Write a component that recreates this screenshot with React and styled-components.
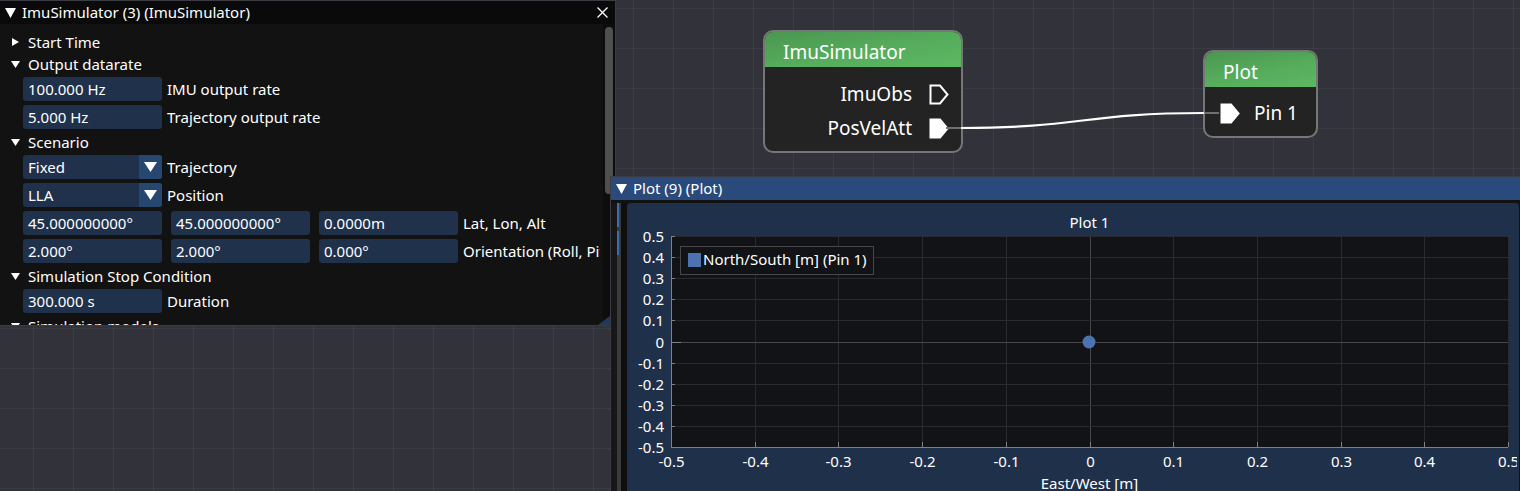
import React from 'react';
import styled, { createGlobalStyle } from 'styled-components';

const GlobalStyle = createGlobalStyle`
  html, body {
    margin: 0;
    padding: 0;
    background: #32323a;
    overflow: hidden;
  }
`;

const Canvas = styled.div`
  position: relative;
  width: 1520px;
  height: 491px;
  overflow: hidden;
  background-color: #32323a;
  background-image:
    linear-gradient(to right, #3c3c45 1px, transparent 1px),
    linear-gradient(to bottom, #3c3c45 1px, transparent 1px);
  background-size: 40px 40px;
  background-position: 33px 8px;
  font-family: "Noto Sans", "Liberation Sans", sans-serif;
  font-size: 15px;
  color: #ffffff;
`;

// ---------- floating ImGui windows ----------

const Window = styled.div`
  position: absolute;
  left: ${p => p.$x}px;
  top: ${p => p.$y}px;
  width: ${p => p.$w}px;
  height: ${p => p.$h}px;
  box-sizing: border-box;
  border: 1px solid #3b3b44;
  background: #121212;
  display: flex;
  flex-direction: column;
  overflow: hidden;
  z-index: ${p => p.$z || 1};
`;

const TitleBar = styled.div`
  flex: 0 0 23px;
  display: flex;
  align-items: center;
  gap: 6px;
  padding: 0 7px 0 5px;
  background: ${p => (p.$active ? '#294a7a' : '#0a0a0a')};
  white-space: nowrap;
`;

const TitleText = styled.span`
  flex: 1;
  line-height: 23px;
`;

const WindowInner = styled.div`
  flex: 1;
  display: flex;
  min-height: 0;
`;

const Body = styled.div`
  flex: 1;
  margin-right: 3px;
  padding-top: 9px;
  display: flex;
  flex-direction: column;
  gap: 4px;
  overflow: hidden;
  line-height: 18px;
`;

const TreeRow = styled.div`
  flex: 0 0 18px;
  height: 18px;
  display: flex;
  align-items: center;
  padding-left: ${p => (p.$open ? 11 : 12)}px;
  white-space: nowrap;
`;

const ArrowSlot = styled.span`
  width: ${p => (p.$open ? 17 : 16)}px;
  display: flex;
  align-items: center;
`;

const FieldRow = styled.div`
  flex: 0 0 24px;
  height: 24px;
  display: flex;
  align-items: center;
  gap: 9px;
  padding-left: 23px;
  white-space: nowrap;
`;

const Field = styled.div`
  flex: 0 0 139px;
  height: 24px;
  box-sizing: border-box;
  display: flex;
  align-items: center;
  justify-content: space-between;
  padding-left: 5px;
  background: #1f314b;
  border-radius: 3px;
  overflow: hidden;
`;

const ComboButton = styled.div`
  width: 23px;
  height: 24px;
  display: flex;
  align-items: center;
  justify-content: center;
  background: #264870;
`;

const FieldLabel = styled.span`
  margin-left: -4px;
`;

const ScrollTrack = styled.div`
  flex: 0 0 12px;
  background: #0d0d0d;
  padding: 3px 0 0 2px;
  box-sizing: border-box;
`;

const ScrollGrab = styled.div`
  width: 8px;
  height: 167px;
  border-radius: 4px;
  background: #4f4f4f;
`;

const ResizeGrip = styled.div`
  position: absolute;
  right: 0;
  bottom: 0;
  width: 17px;
  height: 13px;
  background: #22395a;
  clip-path: polygon(100% 0, 100% 100%, 0 100%);
`;

// ---------- plot window ----------

const PlotInner = styled.div`
  flex: 1;
  display: flex;
  padding-top: 3px;
  min-height: 0;
`;

const Gutter = styled.div`
  flex: 0 0 16px;
  display: flex;
`;

const GutterPad = styled.div`
  width: 6px;
  background: #171717;
`;

const GutterRail = styled.div`
  width: 4px;
  background: #3a3a3a;
  display: flex;
  flex-direction: column;
  gap: 4px;
`;

const RailMark = styled.div`
  width: 2px;
  height: 24px;
  background: #3d6fb0;
`;

const GutterDark = styled.div`
  flex: 1;
  background: #0e0e0e;
`;

const PlotFrame = styled.div`
  flex: 1;
  margin-right: 2px;
  background: #1f304b;
  border-radius: 4px 4px 0 0;
  overflow: hidden;
`;

// ---------- node editor ----------

const Node = styled.div`
  position: absolute;
  left: ${p => p.$x}px;
  top: ${p => p.$y}px;
  width: ${p => p.$w}px;
  height: ${p => p.$h}px;
  box-sizing: border-box;
  border: 2px solid #767676;
  border-radius: 10px;
  background: #232323;
  overflow: hidden;
  display: flex;
  flex-direction: column;
`;

const NodeHeader = styled.div`
  flex: 0 0 35px;
  box-sizing: border-box;
  display: flex;
  align-items: center;
  padding: 5px 0 0 18px;
  font-size: 19px;
  background: linear-gradient(170deg, #4b9650 0%, #56ad5c 55%, #5cb862 100%);
`;

const NodeBody = styled.div`
  flex: 1;
  display: flex;
  flex-direction: column;
  align-items: ${p => (p.$input ? 'flex-start' : 'flex-end')};
  padding: ${p => (p.$input ? '9px 0 0 15px' : '10px 12px 0 0')};
`;

const PinRow = styled.div`
  height: 34px;
  display: flex;
  align-items: center;
  gap: ${p => (p.$input ? 14 : 17)}px;
  font-size: 19px;
`;

const LinkLayer = styled.svg`
  position: absolute;
  left: 0;
  top: 0;
  pointer-events: none;
`;

// ---------- icons ----------

const Tri = ({ dir = 'down', w, h }) => (
  <svg width={w} height={h} viewBox={`0 0 ${w} ${h}`} style={{ display: 'block' }}>
    <polygon
      points={dir === 'down' ? `0,0 ${w},0 ${w / 2},${h}` : `0,0 ${w},${h / 2} 0,${h}`}
      fill="#fff"
    />
  </svg>
);

const CloseIcon = () => (
  <svg width="11" height="11" viewBox="0 0 11 11" style={{ display: 'block' }}>
    <path d="M0.5 0.5 L10.5 10.5 M10.5 0.5 L0.5 10.5" stroke="#fff" strokeWidth="1.3" />
  </svg>
);

const Pin = ({ filled }) => (
  <svg width="20" height="21" viewBox="0 0 20 21" style={{ display: 'block' }}>
    <polygon
      points="1.5,1.5 11,1.5 18.5,10.5 11,19.5 1.5,19.5"
      fill={filled ? '#fff' : 'none'}
      stroke="#fff"
      strokeWidth="2"
      strokeLinejoin="miter"
    />
  </svg>
);

// ---------- plot chart ----------

const yTicks = ['0.5', '0.4', '0.3', '0.2', '0.1', '0', '-0.1', '-0.2', '-0.3', '-0.4', '-0.5'];
const xTicks = ['-0.5', '-0.4', '-0.3', '-0.2', '-0.1', '0', '0.1', '0.2', '0.3', '0.4', '0.5'];

const PlotChart = () => {
  const left = 44;
  const right = 881;
  const top = 33;
  const bottom = 244;
  const dx = (right - left) / 10;
  const dy = (bottom - top) / 10;
  const textProps = {
    fill: '#fff',
    fontSize: 15,
    fontFamily: '"Noto Sans", "Liberation Sans", sans-serif',
  };
  return (
    <svg width="890" height="300" style={{ display: 'block' }}>
      <text x={462.5} y={25} textAnchor="middle" {...textProps}>Plot 1</text>
      <rect x={left} y={top} width={right - left} height={bottom - top} fill="#121316" />
      {xTicks.map((t, i) => {
        const x = Math.round(left + i * dx) + 0.5;
        return (
          <g key={'x' + t}>
            <line x1={x} y1={top} x2={x} y2={bottom} stroke={i === 5 ? '#48484c' : '#2a2a2f'} />
            <line x1={x} y1={bottom - 5} x2={x} y2={bottom} stroke="#808080" />
            <text x={x} y={264} textAnchor="middle" {...textProps}>{t}</text>
          </g>
        );
      })}
      {yTicks.map((t, i) => {
        const y = Math.round(top + i * dy) + 0.5;
        return (
          <g key={'y' + t}>
            <line x1={left} y1={y} x2={right} y2={y} stroke={i === 5 ? '#48484c' : '#2a2a2f'} />
            <line x1={left} y1={y} x2={left + (i === 5 ? 10 : 4)} y2={y} stroke="#808080" />
            <text x={37} y={y + 5} textAnchor="end" {...textProps}>{t}</text>
          </g>
        );
      })}
      <line x1={left + 0.5} y1={top} x2={left + 0.5} y2={bottom} stroke="#808080" />
      <line x1={left} y1={bottom + 0.5} x2={right} y2={bottom + 0.5} stroke="#808080" />
      <rect x={53.5} y={43.5} width={193} height={28} fill="#121316" stroke="#474747" />
      <rect x={61} y={50} width={13} height={14} fill="#4c72b0" />
      <text x={76} y={62} {...textProps}>North/South [m] (Pin 1)</text>
      <circle cx={462} cy={139} r={6.5} fill="#4c72b0" />
      <text x={462.5} y={286} textAnchor="middle" {...textProps}>East/West [m]</text>
    </svg>
  );
};

// ---------- page ----------

const imuRows = [
  { kind: 'tree', text: 'Start Time', open: false },
  { kind: 'tree', text: 'Output datarate', open: true },
  { kind: 'field', values: ['100.000 Hz'], label: 'IMU output rate' },
  { kind: 'field', values: ['5.000 Hz'], label: 'Trajectory output rate' },
  { kind: 'tree', text: 'Scenario', open: true },
  { kind: 'combo', value: 'Fixed', label: 'Trajectory' },
  { kind: 'combo', value: 'LLA', label: 'Position' },
  { kind: 'field', values: ['45.000000000°', '45.000000000°', '0.0000m'], label: 'Lat, Lon, Alt' },
  { kind: 'field', values: ['2.000°', '2.000°', '0.000°'], label: 'Orientation (Roll, Pitch, Yaw)' },
  { kind: 'tree', text: 'Simulation Stop Condition', open: true },
  { kind: 'field', values: ['300.000 s'], label: 'Duration' },
  { kind: 'tree', text: 'Simulation models', open: true },
];

const Row = ({ row }) => {
  if (row.kind === 'tree') {
    return (
      <TreeRow $open={row.open}>
        <ArrowSlot $open={row.open}>
          {row.open ? <Tri dir="down" w={9} h={7} /> : <Tri dir="right" w={7} h={8} />}
        </ArrowSlot>
        {row.text}
      </TreeRow>
    );
  }
  if (row.kind === 'combo') {
    return (
      <FieldRow>
        <Field>
          {row.value}
          <ComboButton><Tri dir="down" w={13} h={10} /></ComboButton>
        </Field>
        <FieldLabel>{row.label}</FieldLabel>
      </FieldRow>
    );
  }
  return (
    <FieldRow>
      {row.values.map((v, i) => <Field key={i}>{v}</Field>)}
      <FieldLabel>{row.label}</FieldLabel>
    </FieldRow>
  );
};

export default function App() {
  return (
    <Canvas>
      <GlobalStyle />

      <Node $x={763} $y={30} $w={200} $h={123}>
        <NodeHeader>ImuSimulator</NodeHeader>
        <NodeBody>
          <PinRow>ImuObs<Pin /></PinRow>
          <PinRow>PosVelAtt<Pin filled /></PinRow>
        </NodeBody>
      </Node>

      <Node $x={1203} $y={50} $w={115} $h={88}>
        <NodeHeader>Plot</NodeHeader>
        <NodeBody $input>
          <PinRow $input><Pin filled />Pin 1</PinRow>
        </NodeBody>
      </Node>

      <LinkLayer width="1520" height="491">
        <line x1="946" y1="128" x2="961" y2="128" stroke="#707070" strokeWidth="2" />
        <path d="M961 128 C1080 128 1085 113 1204 113" stroke="#fff" strokeWidth="2.2" fill="none" />
        <line x1="1204" y1="113" x2="1219" y2="113" stroke="#707070" strokeWidth="2" />
      </LinkLayer>

      <Window $x={-1} $y={0} $w={617} $h={326} $z={2}>
        <TitleBar>
          <Tri dir="down" w={11} h={10} />
          <TitleText>ImuSimulator (3) (ImuSimulator)</TitleText>
          <CloseIcon />
        </TitleBar>
        <WindowInner>
          <Body>
            {imuRows.map((row, i) => <Row key={i} row={row} />)}
          </Body>
          <ScrollTrack><ScrollGrab /></ScrollTrack>
        </WindowInner>
        <ResizeGrip />
      </Window>

      <Window $x={610} $y={176} $w={912} $h={330} $z={3}>
        <TitleBar $active>
          <Tri dir="down" w={11} h={10} />
          <TitleText>Plot (9) (Plot)</TitleText>
        </TitleBar>
        <PlotInner>
          <Gutter>
            <GutterPad />
            <GutterRail>
              <RailMark />
              <RailMark />
            </GutterRail>
            <GutterDark />
          </Gutter>
          <PlotFrame>
            <PlotChart />
          </PlotFrame>
        </PlotInner>
      </Window>
    </Canvas>
  );
}
